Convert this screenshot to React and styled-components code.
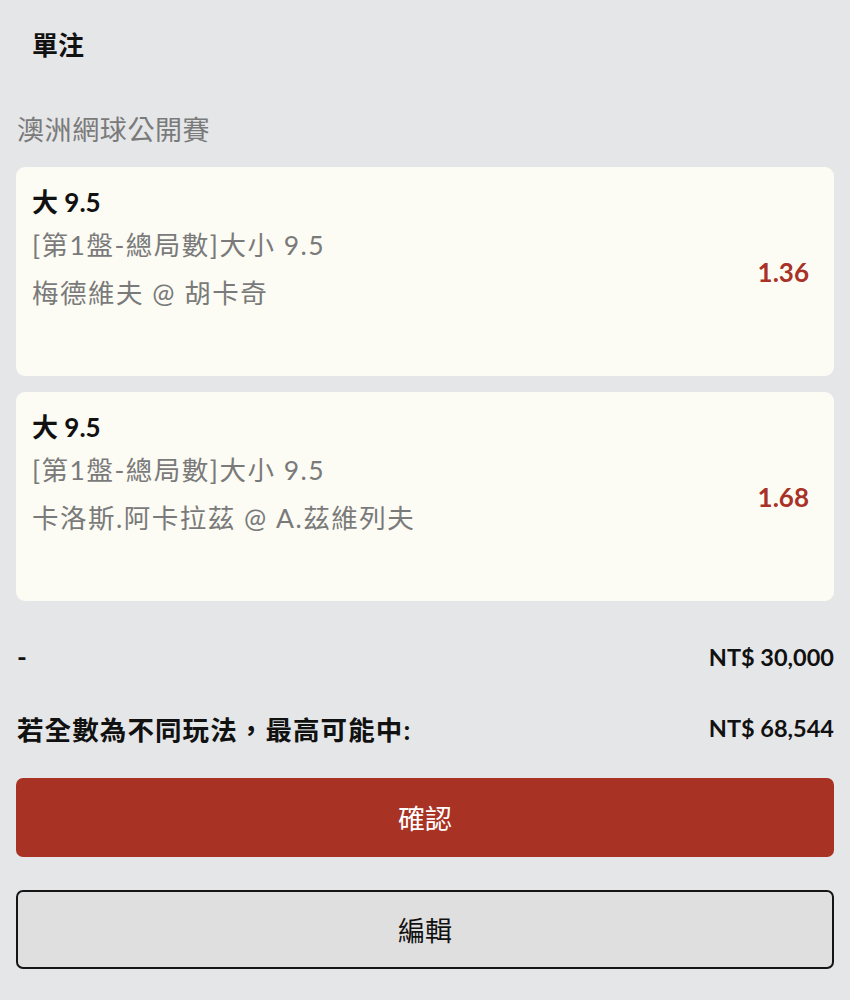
import React from "react";
import styled, { createGlobalStyle } from "styled-components";

const Global = createGlobalStyle`
  html, body { margin: 0; padding: 0; background: #e5e6e8; }
  body { font-family: "Lato", "Noto Sans CJK TC", sans-serif; color: #111; }
  * { box-sizing: border-box; }
`;

const Page = styled.div`
  width: 850px;
  min-height: 1000px;
  padding: 0 16px;
  background: #e5e6e8;
  display: flex;
  flex-direction: column;
`;

const Title = styled.div`
  height: 90px;
  line-height: 90px;
  padding-left: 16px;
  font-size: 26px;
  font-weight: 700;
  color: #111;
`;

const League = styled.div`
  padding: 12px 0 9px 1px;
  line-height: 56px;
  font-size: 27px;
  letter-spacing: 0.6px;
  color: #7a7a7a;
`;

const CardList = styled.div`
  display: flex;
  flex-direction: column;
  gap: 16px;
`;

const Card = styled.div`
  height: 209px;
  background: #fcfcf4;
  border-radius: 9px;
  padding: 16px 25px 16px 16px;
  display: flex;
  align-items: center;
`;

const CardBody = styled.div`
  flex: 1;
  align-self: flex-start;
  display: flex;
  flex-direction: column;
`;

const Pick = styled.div`
  font-size: 26px;
  font-weight: 700;
  line-height: 38px;
  color: #111;
`;

const Info = styled.div`
  font-size: 26.5px;
  line-height: 48px;
  letter-spacing: 1.5px;
  color: #7a7a7a;
  white-space: nowrap;
`;

const Odds = styled.div`
  font-size: 26px;
  font-weight: 700;
  color: #a93226;
`;

const SummaryRow = styled.div`
  height: 56px;
  display: flex;
  align-items: center;
  justify-content: space-between;
  padding-left: 1px;
  font-weight: 700;
  color: #111;
  margin-top: ${(p) => p.$top}px;
`;

const Label = styled.span`
  font-size: 26.5px;
  letter-spacing: 1.1px;
`;

const Amount = styled.span`
  font-size: 23.5px;
  letter-spacing: 0px;
`;

const Button = styled.button`
  display: flex;
  align-items: center;
  justify-content: center;
  width: 100%;
  height: 79px;
  border-radius: 7px;
  font-family: "Lato", "Noto Sans CJK TC", sans-serif;
  font-size: 27px;
  margin-top: ${(p) => p.$top}px;
  cursor: pointer;
  background: ${(p) => (p.$primary ? "#a83224" : "#dfdfdf")};
  color: ${(p) => (p.$primary ? "#ffffff" : "#111")};
  border: ${(p) => (p.$primary ? "none" : "2px solid #151515")};
`;

const bets = [
  { pick: "大 9.5", market: "[第1盤-總局數]大小 9.5", match: "梅德維夫 @ 胡卡奇", odds: "1.36" },
  { pick: "大 9.5", market: "[第1盤-總局數]大小 9.5", match: "卡洛斯.阿卡拉茲 @ A.茲維列夫", odds: "1.68" },
];

export default function App() {
  return (
    <>
      <Global />
      <Page>
        <Title>單注</Title>
        <League>澳洲網球公開賽</League>
        <CardList>
          {bets.map((b, i) => (
            <Card key={i}>
              <CardBody>
                <Pick>{b.pick}</Pick>
                <Info>{b.market}</Info>
                <Info>{b.match}</Info>
              </CardBody>
              <Odds>{b.odds}</Odds>
            </Card>
          ))}
        </CardList>
        <SummaryRow $top={28}>
          <Label>-</Label>
          <Amount>NT$ 30,000</Amount>
        </SummaryRow>
        <SummaryRow $top={15}>
          <Label>若全數為不同玩法，最高可能中:</Label>
          <Amount>NT$ 68,544</Amount>
        </SummaryRow>
        <Button $primary $top={22}>確認</Button>
        <Button $top={33}>編輯</Button>
      </Page>
    </>
  );
}
